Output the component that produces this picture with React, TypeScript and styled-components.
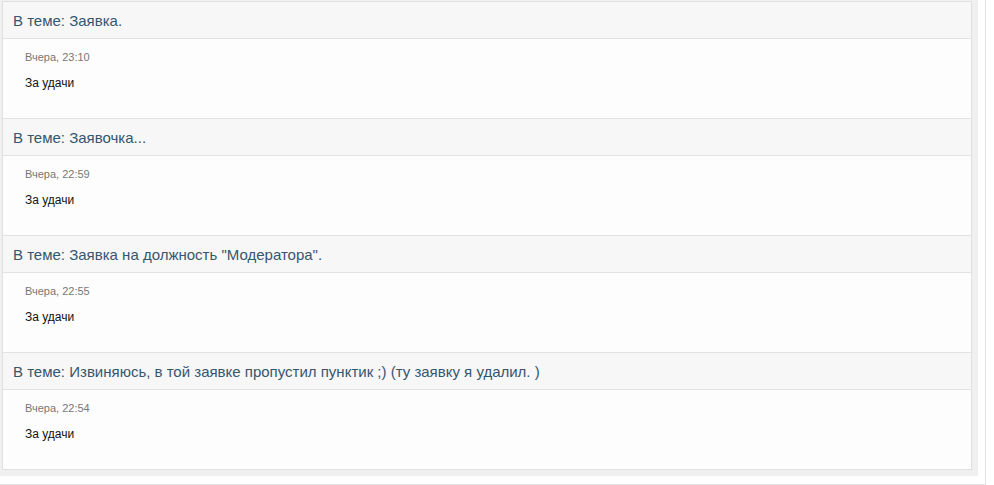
import React from "react";
import styled, { createGlobalStyle } from "styled-components";

const Global = createGlobalStyle`
  html, body { margin: 0; padding: 0; background: #ffffff; }
  body { font-family: "Liberation Sans", Arial, sans-serif; }
`;

const Page = styled.div`
  width: 986px;
  height: 485px;
  box-sizing: border-box;
  border-right: 1px solid #e3e3e3;
  border-bottom: 1px solid #e3e3e3;
  padding: 0 7px 8px 0;
`;

const Panel = styled.div`
  background: #f0f0f0;
  padding: 1px 6px 6px 2px;
`;

const List = styled.div`
  border: 1px solid #e0e0e0;
  background: #fdfdfd;
`;

const Section = styled.div`
  & + & {
    border-top: 1px solid #e3e3e3;
  }
`;

const Header = styled.div`
  height: 36px;
  display: flex;
  align-items: center;
  padding: 0 10px;
  background: #f7f7f7;
  border-bottom: 1px solid #e3e3e3;
  font-size: 15px;
  color: #35566f;
`;

const Body = styled.div`
  height: 79px;
  box-sizing: border-box;
  padding: 12px 22px 0;
  background: #fdfdfd;
`;

const Date = styled.div`
  font-size: 11px;
  line-height: 13px;
  color: #777777;
`;

const Text = styled.div`
  margin-top: 12px;
  font-size: 12px;
  line-height: 14px;
  color: #111111;
`;

const posts = [
  { topic: "Заявка.", date: "Вчера, 23:10", text: "За удачи" },
  { topic: "Заявочка...", date: "Вчера, 22:59", text: "За удачи" },
  { topic: "Заявка на должность \"Модератора\".", date: "Вчера, 22:55", text: "За удачи" },
  {
    topic: "Извиняюсь, в той заявке пропустил пунктик ;) (ту заявку я удалил. )",
    date: "Вчера, 22:54",
    text: "За удачи",
  },
];

export default function App() {
  return (
    <>
      <Global />
      <Page>
        <Panel>
          <List>
            {posts.map((p, i) => (
              <Section key={i}>
                <Header>В теме: {p.topic}</Header>
                <Body>
                  <Date>{p.date}</Date>
                  <Text>{p.text}</Text>
                </Body>
              </Section>
            ))}
          </List>
        </Panel>
      </Page>
    </>
  );
}
